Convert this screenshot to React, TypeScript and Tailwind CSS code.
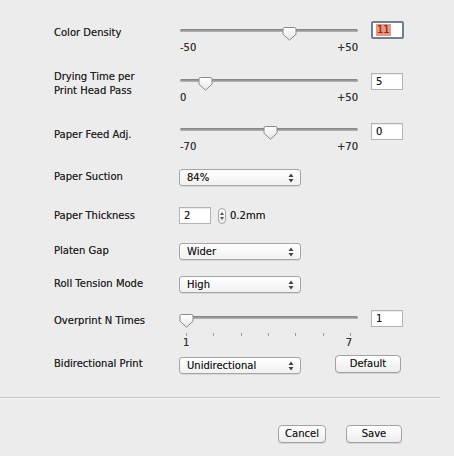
import React from "react";

const Thumb = ({ left }: { left: number }) => (
  <svg
    width="15"
    height="14"
    viewBox="0 0 15 14"
    className="absolute top-0"
    style={{ left }}
  >
    <defs>
      <linearGradient id="thumbFill" x1="0" y1="0" x2="0" y2="1">
        <stop offset="0" stopColor="#ffffff" />
        <stop offset="1" stopColor="#e6e6e6" />
      </linearGradient>
    </defs>
    <path
      d="M1 2 Q1 0.5 2.5 0.5 H12.5 Q14 0.5 14 2 V7.2 L7.5 13.2 L1 7.2 Z"
      fill="url(#thumbFill)"
      stroke="#8a8a8a"
      strokeWidth="1"
    />
  </svg>
);

const Slider = ({
  left,
  min,
  max,
  ticks,
}: {
  left: number;
  min: string;
  max: string;
  ticks?: boolean;
}) => (
  <div className="w-[180px]">
    <div className="relative h-[14px]">
      <div className="absolute left-[2px] right-0 top-[2px] h-[3px] rounded-full bg-gradient-to-b from-[#7e7e7e] to-[#b8b8b8]" />
      <Thumb left={left} />
    </div>
    {ticks ? (
      <>
        <div className="relative mt-[5px] h-[3px]">
          {[0, 1, 2, 3, 4, 5, 6].map((i) => (
            <div
              key={i}
              className="absolute top-0 h-[3px] w-px bg-[#9a9a9a]"
              style={{ left: 8 + i * 27.3 }}
            />
          ))}
        </div>
        <div className="mt-[1px] flex justify-between pl-[5px] pr-[6px] text-[10px] leading-[12px] text-[#333]">
          <span>{min}</span>
          <span>{max}</span>
        </div>
      </>
    ) : (
      <div className="mt-[1px] flex justify-between pl-[2px] text-[10px] leading-[12px] text-[#333]">
        <span>{min}</span>
        <span>{max}</span>
      </div>
    )}
  </div>
);

const NumBox = ({ value, focus }: { value: string; focus?: boolean }) =>
  focus ? (
    <div className="flex h-[18px] w-[33px] items-center rounded-[2px] border-2 border-[#6f7f90] bg-white pl-[3px]">
      <span className="bg-[#ec9582] px-px text-[10px] leading-[12px] text-[#8a2a18]">
        {value}
      </span>
    </div>
  ) : (
    <div className="flex h-[17px] w-[32px] items-center border border-[#b4b4b4] bg-white pl-[4px] text-[10px] leading-[12px] text-[#1e1e1e] shadow-[inset_0_1px_0_rgba(0,0,0,0.08)]">
      {value}
    </div>
  );

const Arrows = () => (
  <svg width="6" height="10" viewBox="0 0 6 10">
    <path d="M3 0.5 L5.5 4 H0.5 Z" fill="#444" />
    <path d="M3 9.5 L5.5 6 H0.5 Z" fill="#444" />
  </svg>
);

const Popup = ({ value }: { value: string }) => (
  <div className="flex h-[17px] w-[122px] items-center justify-between rounded-[3px] border border-[#a6a6a6] bg-gradient-to-b from-white to-[#f1f1f1] pl-[7px] pr-[6px] text-[10px] leading-[12px] text-[#1e1e1e] shadow-[0_1px_0_rgba(0,0,0,0.08)]">
    <span>{value}</span>
    <Arrows />
  </div>
);

const Button = ({ label, w }: { label: string; w: string }) => (
  <div
    className={`flex h-[18px] ${w} items-center justify-center rounded-[4px] border border-[#a2a2a2] bg-gradient-to-b from-white to-[#ededed] text-[10px] leading-[12px] text-[#1e1e1e] shadow-[0_1px_0_rgba(0,0,0,0.1)]`}
  >
    {label}
  </div>
);

const Label = ({ children, mt }: { children: React.ReactNode; mt: string }) => (
  <div className={`w-[124px] shrink-0 ${mt} text-[10px] leading-[12px] text-[#222]`}>
    {children}
  </div>
);

export default function App() {
  return (
    <div
      className="h-[456px] w-[454px] overflow-hidden bg-[#ececec] [text-shadow:0_0_0.6px_rgba(0,0,0,0.55)]"
      style={{ fontFamily: '"DejaVu Sans", Verdana, sans-serif' }}
    >
      <div className="pl-[54px]">
        {/* Color Density */}
        <div className="mt-[21px] flex items-start">
          <Label mt="mt-[6px]">Color Density</Label>
          <div className="mt-[6px]">
            <Slider left={104} min="-50" max="+50" />
          </div>
          <div className="ml-[13px]">
            <NumBox value="11" focus />
          </div>
        </div>

        {/* Drying Time */}
        <div className="mt-[16px] flex items-start">
          <div className="w-[124px] shrink-0 text-[10px] leading-[14px] text-[#222]">
            Drying Time per
            <br />
            Print Head Pass
          </div>
          <div className="mt-[7px]">
            <Slider left={20} min="0" max="+50" />
          </div>
          <div className="ml-[13px] mt-[3px]">
            <NumBox value="5" />
          </div>
        </div>

        {/* Paper Feed */}
        <div className="mt-[19px] flex items-start">
          <Label mt="mt-[6px]">Paper Feed Adj.</Label>
          <div className="mt-[3px]">
            <Slider left={85} min="-70" max="+70" />
          </div>
          <div className="ml-[13px]">
            <NumBox value="0" />
          </div>
        </div>

        {/* Paper Suction */}
        <div className="mt-[16px] flex items-start">
          <Label mt="mt-[2px]">Paper Suction</Label>
          <div className="ml-px">
            <Popup value="84%" />
          </div>
        </div>

        {/* Paper Thickness */}
        <div className="mt-[21px] flex items-center">
          <Label mt="mt-0">Paper Thickness</Label>
          <div className="ml-px">
            <NumBox value="2" />
          </div>
          <div className="ml-[7px] flex h-[16px] w-[8px] flex-col items-center justify-center gap-[2px] rounded-full border border-[#a8a8a8] bg-gradient-to-b from-white to-[#ececec]">
            <svg width="4" height="3" viewBox="0 0 4 3">
              <path d="M2 0 L4 3 H0 Z" fill="#555" />
            </svg>
            <svg width="4" height="3" viewBox="0 0 4 3">
              <path d="M2 3 L4 0 H0 Z" fill="#555" />
            </svg>
          </div>
          <span className="ml-[4px] text-[10px] leading-[12px] text-[#1e1e1e]">0.2mm</span>
        </div>

        {/* Platen Gap */}
        <div className="mt-[19px] flex items-start">
          <Label mt="mt-[2px]">Platen Gap</Label>
          <div className="ml-px">
            <Popup value="Wider" />
          </div>
        </div>

        {/* Roll Tension */}
        <div className="mt-[16px] flex items-start">
          <Label mt="mt-[2px]">Roll Tension Mode</Label>
          <div className="ml-px">
            <Popup value="High" />
          </div>
        </div>

        {/* Overprint */}
        <div className="mt-[17px] flex items-start">
          <Label mt="mt-[5px]">Overprint N Times</Label>
          <div className="mt-[4px]">
            <Slider left={1} min="1" max="7" ticks />
          </div>
          <div className="ml-[13px]">
            <NumBox value="1" />
          </div>
        </div>

        {/* Bidirectional */}
        <div className="mt-[6px] flex items-start">
          <Label mt="mt-[3px]">Bidirectional Print</Label>
          <div className="ml-px mt-[2px]">
            <Popup value="Unidirectional" />
          </div>
          <div className="ml-[34px]">
            <Button label="Default" w="w-[66px]" />
          </div>
        </div>
      </div>

      {/* Separator */}
      <div className="mt-[23px] w-[440px] border-t border-[#c6c6c6] border-b border-b-[#f7f7f7]" />

      {/* Footer buttons */}
      <div className="mt-[26px] flex justify-end gap-[20px] pr-[52px]">
        <Button label="Cancel" w="w-[48px]" />
        <Button label="Save" w="w-[56px]" />
      </div>
    </div>
  );
}
